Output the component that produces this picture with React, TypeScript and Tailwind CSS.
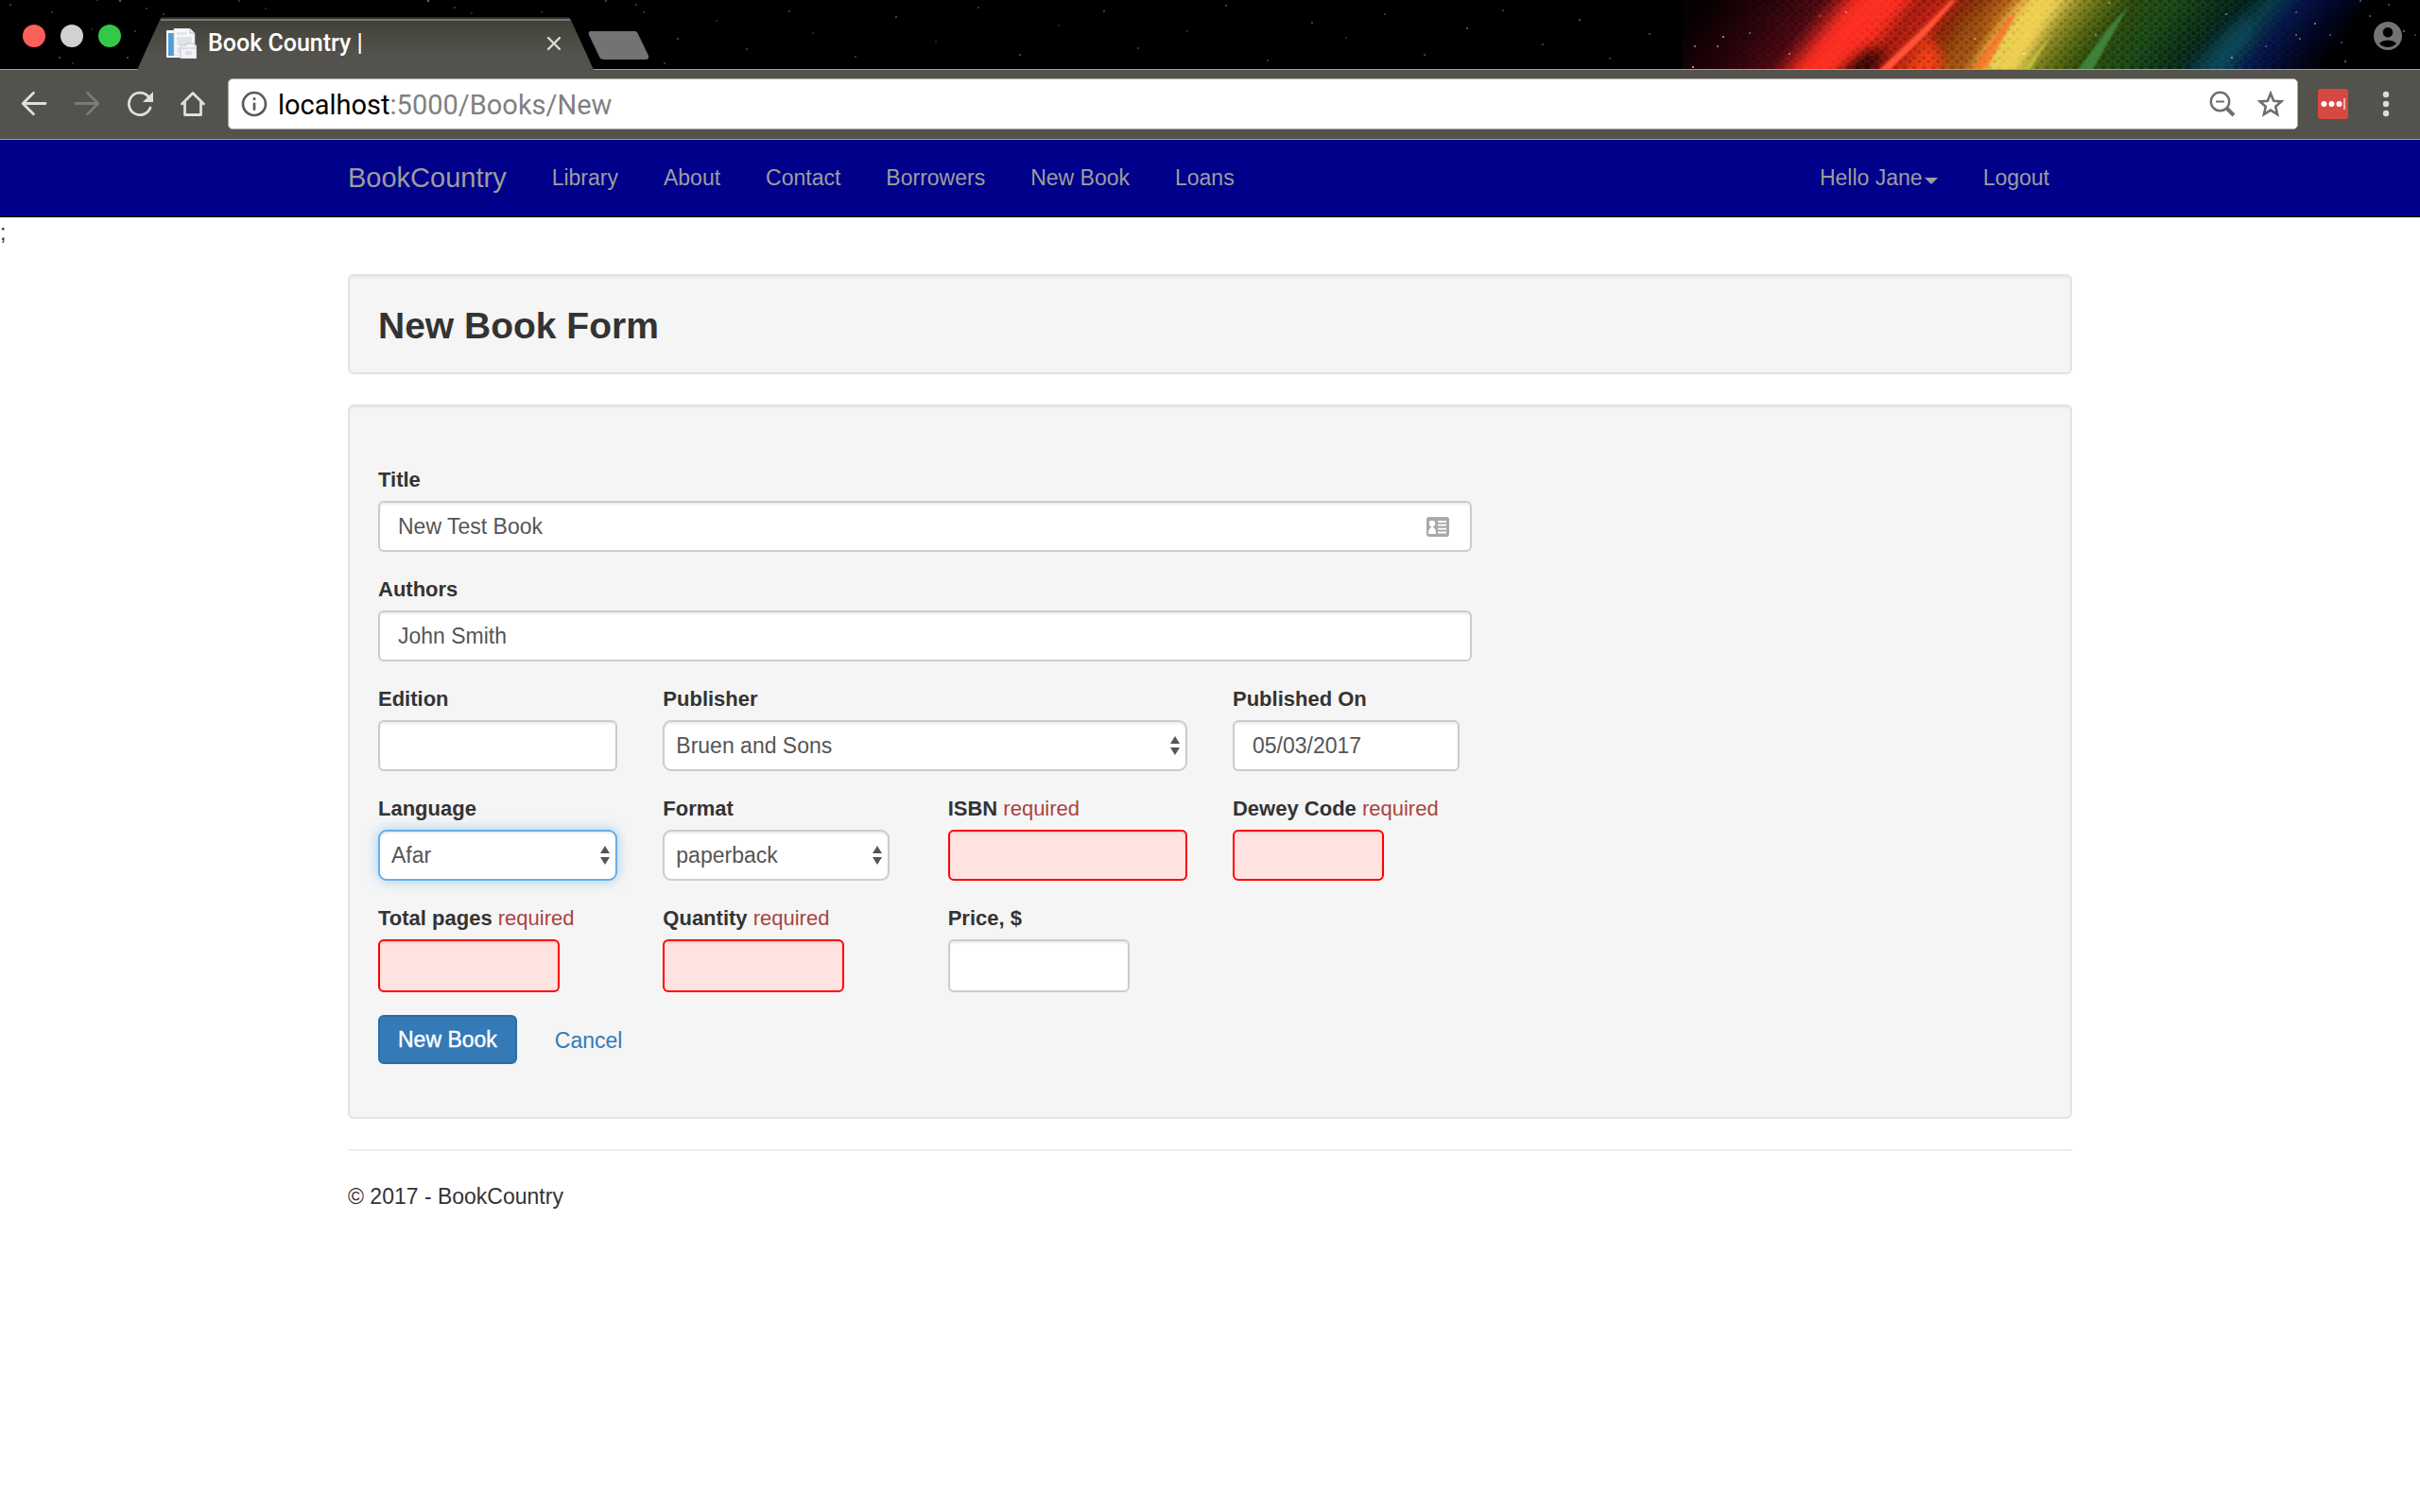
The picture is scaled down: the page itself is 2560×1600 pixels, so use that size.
import type { ReactNode } from "react";
import { MdAccountCircle, MdInfoOutline } from "react-icons/md";

const STARS: [number, number, number][] = [
  [11, 5, 0.4], [55, 13, 0.4], [127, 1, 0.7], [103, 0, 0.4], [155, 9, 0.4], [97, 31, 0.3], [143, 33, 0.4],
  [63, 61, 0.5], [135, 61, 0.5], [77, 67, 0.3], [173, 15, 0.4], [253, 1, 0.4], [281, 9, 0.3], [453, 1, 0.8],
  [481, 8, 0.4], [499, 14, 0.3], [573, 13, 0.3], [641, 1, 0.5], [673, 5, 0.4], [681, 13, 0.4], [717, 41, 0.5],
  [703, 67, 0.4], [758, 22, 0.3], [790, 52, 0.4], [835, 12, 0.4], [860, 35, 0.3], [905, 60, 0.4], [948, 18, 0.5],
  [990, 44, 0.3], [1035, 8, 0.4], [1079, 58, 0.5], [1120, 27, 0.3], [1168, 12, 0.5], [1204, 51, 0.4],
  [1256, 33, 0.3], [1297, 6, 0.5], [1341, 64, 0.4], [1388, 24, 0.5], [1424, 40, 0.3], [1465, 15, 0.4],
  [1507, 58, 0.5], [1552, 30, 0.6], [1590, 11, 0.4], [1632, 47, 0.5], [1671, 21, 0.6], [1703, 62, 0.4],
  [1745, 36, 0.5], [1791, 71, 0.8], [1793, 49, 0.6], [1817, 49, 0.6], [1823, 39, 0.7], [1851, 35, 0.5],
  [1893, 57, 0.6], [1925, 17, 0.4], [1953, 13, 0.5], [2089, 41, 0.5], [2141, 57, 0.9], [2217, 37, 0.5],
  [2231, 3, 0.5], [2355, 15, 0.5], [2361, 61, 0.6], [2397, 49, 0.4], [2429, 37, 0.5], [2433, 41, 0.5],
  [2449, 25, 0.6], [2429, 13, 0.4], [2477, 45, 0.4], [2481, 65, 0.5], [2497, 1, 0.4], [2507, 17, 0.4],
  [2527, 5, 0.4], [2543, 33, 0.5], [2555, 37, 0.3], [2465, 37, 0.4],
];

function ThemeArt() {
  return (
    <>
      <svg className="absolute left-0 top-0" width="2560" height="73" aria-hidden="true">
        {STARS.filter((s) => s[0] < 1780).map(([x, y, o], i) => (
          <rect key={i} x={x - 1} y={y - 1} width="2" height="2" fill="#fff" opacity={o * 0.5} />
        ))}
      </svg>
      <svg className="absolute right-0 top-0" width="780" height="73" viewBox="0 0 780 73" aria-hidden="true">
        <defs>
          <linearGradient id="spectrum" gradientUnits="userSpaceOnUse" x1="0" y1="0" x2="780" y2="0" gradientTransform="skewX(-38)">
            <stop offset="0.03" stopColor="#050001" />
            <stop offset="0.13" stopColor="#2a030b" />
            <stop offset="0.19" stopColor="#48070f" />
            <stop offset="0.235" stopColor="#d9241f" />
            <stop offset="0.26" stopColor="#ff3029" />
            <stop offset="0.295" stopColor="#f52b1c" />
            <stop offset="0.325" stopColor="#a8190f" />
            <stop offset="0.36" stopColor="#bf200f" />
            <stop offset="0.385" stopColor="#8a2408" />
            <stop offset="0.41" stopColor="#8a3c0a" />
            <stop offset="0.445" stopColor="#b86415" />
            <stop offset="0.462" stopColor="#e2a63a" />
            <stop offset="0.48" stopColor="#ecd050" />
            <stop offset="0.51" stopColor="#e2c94c" />
            <stop offset="0.54" stopColor="#8f8c26" />
            <stop offset="0.575" stopColor="#536610" />
            <stop offset="0.61" stopColor="#29480a" />
            <stop offset="0.67" stopColor="#154716" />
            <stop offset="0.72" stopColor="#083016" />
            <stop offset="0.765" stopColor="#03201d" />
            <stop offset="0.8" stopColor="#063c4a" />
            <stop offset="0.84" stopColor="#041448" />
            <stop offset="0.89" stopColor="#010726" />
            <stop offset="0.94" stopColor="#000000" />
          </linearGradient>
          <pattern id="mesh" width="10" height="10" patternUnits="userSpaceOnUse">
            <path d="M0 2 L2 2 L4 5 L7 5 L9 2 L10 2 M2 2 L0 -1 M9 2 L11 -1 M4 5 L2 8 L0 8 M7 5 L9 8 L10 8 M2 8 L4 11 M9 8 L7 11" fill="none" stroke="#ffb080" strokeWidth="1" opacity="0.1" />
            <circle cx="5" cy="1" r="2" fill="#000" opacity="0.14" />
            <circle cx="0" cy="5" r="2" fill="#000" opacity="0.14" />
            <circle cx="10" cy="5" r="2" fill="#000" opacity="0.14" />
          </pattern>
          <linearGradient id="meshFade" x1="0" x2="1" y1="0" y2="0">
            <stop offset="0.03" stopColor="#000" />
            <stop offset="0.25" stopColor="#fff" />
            <stop offset="0.7" stopColor="#fff" />
            <stop offset="0.88" stopColor="#000" />
          </linearGradient>
          <mask id="meshMask">
            <rect width="780" height="73" fill="url(#meshFade)" />
          </mask>
          <filter id="soft" x="-30%" y="-30%" width="160%" height="160%">
            <feGaussianBlur stdDeviation="7" />
          </filter>
          <filter id="slight" x="-30%" y="-30%" width="160%" height="160%">
            <feGaussianBlur stdDeviation="1" />
          </filter>
        </defs>
        <rect width="780" height="73" fill="url(#spectrum)" />
        <path d="M150 90 L195 52 L215 54 L195 90 Z" fill="#240200" filter="url(#soft)" opacity="0.9" />
        <path d="M225 90 L258 35 L276 60 L268 90 Z" fill="#ff3d12" filter="url(#soft)" opacity="0.9" />
        <path d="M275 90 L300 20 L325 25 L300 90 Z" fill="#94480e" filter="url(#soft)" opacity="0.7" />
        <rect width="780" height="73" fill="url(#mesh)" mask="url(#meshMask)" />
        <path d="M112 85 L190 -10 L242 -10 L142 85 Z" fill="#ff2e22" filter="url(#soft)" opacity="0.8" />
        <path d="M306 73 L345 18 L352 16 L322 73 Z" fill="#ff5a24" filter="url(#slight)" opacity="0.6" />
        <path d="M326 85 L376 -10 L398 -10 L352 85 Z" fill="#f2d254" filter="url(#soft)" opacity="0.9" />
        <path d="M360 74 L392 34 L367 74 Z" fill="#c8d04a" filter="url(#slight)" opacity="0.8" />
        <path d="M208 74 L250 34 L284 0 L289 0 L258 36 L219 74 Z" fill="#ff5338" filter="url(#slight)" />
        <path d="M418 74 L450 30 L472 6 L455 36 L434 74 Z" fill="#459045" filter="url(#slight)" opacity="0.8" />
        <path d="M530 80 L565 40 L600 10 L600 40 L570 80 Z" fill="#085063" filter="url(#soft)" opacity="0.6" />
        {STARS.filter((s) => s[0] >= 1780).map(([x, y, o], i) => (
          <rect key={i} x={x - 1781} y={y - 1} width="2" height="2" fill="#fff" opacity={o * 0.7} />
        ))}
      </svg>
    </>
  );
}

function Favicon() {
  return (
    <svg width="32" height="32" viewBox="0 0 32 32" aria-hidden="true" className="shrink-0">
      <rect x="0" y="2" width="20" height="29" fill="#f4f7fa" />
      <rect x="2" y="5" width="6" height="24" fill="#4f9fd6" />
      <path d="M8 0 H25 L30 5 V28 H8 Z" fill="#f6f7f9" stroke="#c9ced6" strokeWidth="0.6" />
      <rect x="11" y="4" width="11" height="3" fill="#e3e6eb" />
      <rect x="11" y="9" width="16" height="9" fill="#dfe3e8" />
      <rect x="11" y="20" width="5" height="6" fill="#e3e6eb" />
      <path d="M25 0 L30 5 H25 Z" fill="#fff" stroke="#9aa0a8" strokeWidth="0.8" />
      <path d="M15 18 H21 V16 H30 V18 H32 V32 H15 Z" fill="#f3f3f7" stroke="#b9bdc8" strokeWidth="0.8" />
      <path d="M16 21 H31" stroke="#c6cad6" />
      <rect x="20" y="24" width="7" height="4" fill="#dcdee8" />
    </svg>
  );
}

function TabStrip() {
  return (
    <header className="relative flex h-[73px] items-center overflow-x-clip bg-black">
      <ThemeArt />
      <div className="relative flex gap-4 pb-px pl-6 pt-1">
        <button aria-label="Close window" className="size-6 rounded-full bg-[#fc605b]" />
        <button aria-label="Minimize window" className="size-6 rounded-full bg-[#d1d1d1]" />
        <button aria-label="Zoom window" className="size-6 rounded-full bg-[#34c84a]" />
      </div>
      <div className="relative ml-[17px] h-[74px] w-[483px] self-start">
        <svg className="absolute left-0 top-0" width="483" height="74" viewBox="0 0 483 74" aria-hidden="true">
          <defs>
            <linearGradient id="tab" x1="0" x2="0" y1="0" y2="1">
              <stop offset="0" stopColor="#403f37" />
              <stop offset="0.7" stopColor="#53524c" />
            </linearGradient>
          </defs>
          <path d="M0 74 L25 19 H458 L483 74 Z" fill="url(#tab)" />
          <path d="M26 19 H457" stroke="#2b2b28" strokeWidth="2" />
          <path d="M25 21 H458" stroke="#77766f" strokeWidth="2" />
        </svg>
        <div className="relative flex h-full items-center pl-[31px] pr-[35px] pt-[18px]">
          <Favicon />
          <span className="ml-3 flex-1 font-[Roboto,sans-serif] text-[25px] font-medium leading-8 text-white">Book Country |</span>
          <button aria-label="Close tab">
            <svg width="14" height="14" viewBox="0 0 14 14">
              <path d="M1 1 L13 13 M13 1 L1 13" stroke="#dcdcda" strokeWidth="2.4" strokeLinecap="round" />
            </svg>
          </button>
        </div>
      </div>
      <button aria-label="New tab" className="relative -ml-[6px] mt-[23px] self-start pt-[10px]">
        <svg width="66" height="30" viewBox="0 0 66 30">
          <path d="M3 0 H49 Q52 0 53 3 L64 26 Q65 30 61 30 H17 Q13 30 12 27 L1 4 Q0 0 3 0 Z" fill="#737373" />
        </svg>
      </button>
      <button aria-label="Profile" className="relative ml-auto mr-4 pt-[3px] text-[#747474]">
        <MdAccountCircle size={36} />
      </button>
    </header>
  );
}

function ToolIcon({ label, color, children }: { label: string; color: string; children: ReactNode }) {
  return (
    <button aria-label={label} className="shrink-0">
      <svg width="28" height="28" viewBox="0 0 28 28" fill="none" stroke={color} strokeWidth="2.8" strokeLinecap="round" strokeLinejoin="round">
        {children}
      </svg>
    </button>
  );
}

function Toolbar() {
  return (
    <div className="flex h-[75px] items-center border-y border-[#a3a29c] bg-[#53524c] pb-px pl-[22px] pr-[30px]">
      <div className="flex gap-7">
        <ToolIcon label="Back" color="#dfdfdc">
          <path d="M26 13.500 H2.500 M13.500 2.200 L2.200 13.500 L13.500 24.800" />
        </ToolIcon>
        <ToolIcon label="Forward" color="#7b7a74">
          <path d="M2 13.500 H25.500 M14.500 2.200 L25.800 13.500 L14.500 24.800" />
        </ToolIcon>
        <ToolIcon label="Reload" color="#dfdfdc">
          <path d="M25 18 A11.700 11.700 0 1 1 22.500 5.800" />
          <path d="M28 1 V12 H17 Z" fill="#dfdfdc" stroke="none" />
        </ToolIcon>
        <ToolIcon label="Home" color="#dfdfdc">
          <path d="M2.500 14 L14 2.500 L25.500 14 M5.500 12.500 V25.500 H22.500 V12.500" />
        </ToolIcon>
      </div>
      <div className="ml-[23px] flex h-[54px] flex-1 items-center rounded-[5px] border border-[#a9a8a3] bg-white pl-[11px] pr-[13px]">
        <MdInfoOutline size={32} color="#5a5a5a" className="shrink-0" />
        <div className="ml-[9px] flex-1 pt-[2px] font-[Roboto,sans-serif] text-[29px] leading-9 text-[#808080]">
          <span className="text-black">localhost</span>:5000/Books/New
        </div>
        <button aria-label="Zoom out" className="mr-[22px]">
          <svg width="28" height="28" viewBox="0 0 28 28" fill="none" stroke="#6e6e6e">
            <circle cx="11.500" cy="11.500" r="9.700" strokeWidth="2.400" />
            <path d="M7 11.500 H16" strokeWidth="2" />
            <path d="M18.500 18.500 L26 26" strokeWidth="4" />
          </svg>
        </button>
        <button aria-label="Bookmark">
          <svg width="30" height="30" viewBox="0 0 30 30" fill="none" stroke="#6e6e6e" strokeWidth="2.600">
            <path d="M15 4 L18.200 11.700 L26.400 12.400 L20.200 17.800 L22.100 26 L15 21.600 L7.900 26 L9.800 17.800 L3.600 12.400 L11.800 11.700 Z" />
          </svg>
        </button>
      </div>
      <button aria-label="Password manager" className="ml-[21px]">
        <svg width="32" height="32" viewBox="0 0 32 32">
          <rect width="32" height="32" rx="3" fill="#d84842" />
          <circle cx="6.500" cy="16" r="3" fill="#fff" />
          <circle cx="14.500" cy="16" r="3" fill="#fff" />
          <circle cx="22.500" cy="16" r="3" fill="#fff" />
          <rect x="27" y="10" width="2" height="12" fill="#f0b4b1" />
        </svg>
      </button>
      <button aria-label="Menu" className="ml-[34px]">
        <svg width="12" height="28" viewBox="0 0 12 28" fill="#dcdcd9">
          <circle cx="6" cy="4" r="3.200" />
          <circle cx="6" cy="14" r="3.200" />
          <circle cx="6" cy="24" r="3.200" />
        </svg>
      </button>
    </div>
  );
}

function NavBar() {
  return (
    <nav className="border-b-2 border-[#080808] bg-[#00008b] text-[#9d9d9d]">
      <div className="mx-auto flex h-20 max-w-[1824px] items-center gap-12 pr-6">
        <a href="#" className="text-[29px]">BookCountry</a>
        {["Library", "About", "Contact", "Borrowers", "New Book", "Loans"].map((item) => (
          <a key={item} href="#">{item}</a>
        ))}
        <a href="#" className="ml-auto flex items-center gap-[2px]">
          Hello Jane
          <svg width="14" height="7" viewBox="0 0 14 7" className="mt-[6px]" aria-hidden="true">
            <path d="M0 0 H14 L7 7 Z" fill="#9d9d9d" />
          </svg>
        </a>
        <a href="#">Logout</a>
      </div>
    </nav>
  );
}

function Field({ id, label, required, className, children }: { id: string; label: string; required?: boolean; className?: string; children: ReactNode }) {
  return (
    <div className={className}>
      <label htmlFor={id} className="mb-[6px] block whitespace-nowrap text-[22px] font-bold leading-8">
        {label}
        {required && <span className="font-normal text-[#a94442]"> required</span>}
      </label>
      {children}
    </div>
  );
}

function TextField({ id, value = "", invalid, tall }: { id: string; value?: string; invalid?: boolean; tall?: boolean }) {
  return (
    <input
      id={id}
      type="text"
      defaultValue={value}
      className={`block w-full rounded-[6px] border-2 px-[19px] text-[#555] shadow-[inset_0_2px_2px_rgba(0,0,0,0.075)] outline-none ${
        invalid ? "border-[#ff0000] bg-[#ffe3e0]" : "border-[#ccc] bg-white"
      } ${tall ? "h-14" : "h-[54px]"}`}
    />
  );
}

function SelectField({ id, value, active }: { id: string; value: string; active?: boolean }) {
  return (
    <div className="relative">
      <select
        id={id}
        className={`block h-[54px] w-full appearance-none rounded-[9px] border-2 bg-white pl-3 pr-8 text-[#555] outline-none ${
          active
            ? "border-[#66afe9] shadow-[inset_0_2px_2px_rgba(0,0,0,0.075),0_0_13px_rgba(102,175,233,0.6)]"
            : "border-[#ccc] shadow-[inset_0_2px_2px_rgba(0,0,0,0.075)]"
        }`}
      >
        <option>{value}</option>
      </select>
      <svg className="pointer-events-none absolute right-2 top-[17px]" width="10" height="20" viewBox="0 0 10 20" aria-hidden="true">
        <path d="M5 0 L10 8 H0 Z M0 12 H10 L5 20 Z" fill="#555" />
      </svg>
    </div>
  );
}

function BookForm() {
  return (
    <form>
      <div className="grid grid-cols-6 gap-x-12 gap-y-6">
        <Field id="title" label="Title" className="col-span-4">
          <div className="relative">
            <TextField id="title" value="New Test Book" />
            <svg className="absolute right-6 top-[17px]" width="24" height="21" viewBox="0 0 24 21" aria-hidden="true">
              <rect width="24" height="21" rx="3" fill="#a9a9a9" />
              <circle cx="6" cy="7" r="3.200" fill="#fff" />
              <path d="M5 8 H7 V11 Q10 12 10 18 H2 Q2 12 5 11 Z" fill="#fff" />
              <path d="M12 5 H21 M12 8.600 H21 M12 12.600 H21 M12 16.500 H21" stroke="#fff" strokeWidth="1.800" />
            </svg>
          </div>
        </Field>
        <Field id="authors" label="Authors" className="col-span-4 col-start-1">
          <TextField id="authors" value="John Smith" />
        </Field>
        <Field id="edition" label="Edition" className="col-start-1">
          <TextField id="edition" />
        </Field>
        <Field id="publisher" label="Publisher" className="col-span-2">
          <SelectField id="publisher" value="Bruen and Sons" />
        </Field>
        <Field id="published" label="Published On">
          <div className="max-w-60">
            <TextField id="published" value="05/03/2017" />
          </div>
        </Field>
        <Field id="language" label="Language" className="col-start-1">
          <SelectField id="language" value="Afar" active />
        </Field>
        <Field id="format" label="Format">
          <div className="max-w-60">
            <SelectField id="format" value="paperback" />
          </div>
        </Field>
        <Field id="isbn" label="ISBN" required>
          <TextField id="isbn" invalid />
        </Field>
        <Field id="dewey" label="Dewey Code" required>
          <div className="max-w-40">
            <TextField id="dewey" invalid />
          </div>
        </Field>
        <Field id="pages" label="Total pages" required className="col-start-1">
          <div className="max-w-48">
            <TextField id="pages" invalid tall />
          </div>
        </Field>
        <Field id="quantity" label="Quantity" required>
          <div className="max-w-48">
            <TextField id="quantity" invalid tall />
          </div>
        </Field>
        <Field id="price" label="Price, $">
          <div className="max-w-48">
            <TextField id="price" tall />
          </div>
        </Field>
      </div>
      <div className="mt-6 flex items-center gap-10">
        <button type="button" className="h-[52px] rounded-[6px] border-2 border-[#2e6da4] bg-[#337ab7] px-[19px] text-white [-webkit-text-stroke:0.4px_white]">
          New Book
        </button>
        <a href="#" className="pt-[2px] text-[#337ab7]">Cancel</a>
      </div>
    </form>
  );
}

export default function App() {
  return (
    <div className="min-h-screen bg-white font-['Liberation_Sans',Arial,sans-serif] text-[23px] leading-8 text-[#333]">
      <TabStrip />
      <Toolbar />
      <NavBar />
      <p>;</p>
      <main className="mx-auto mt-7 max-w-[1824px]">
        <section className="rounded-[6px] border-2 border-[#e3e3e3] bg-[#f5f5f5] px-[30px] pb-7 pt-8 shadow-[inset_0_2px_2px_rgba(0,0,0,0.05)]">
          <h2 className="text-[39px] font-bold leading-[42px]">New Book Form</h2>
        </section>
        <section className="mt-8 rounded-[6px] border-2 border-[#e3e3e3] bg-[#f5f5f5] px-[30px] pb-14 pt-[62px] shadow-[inset_0_2px_2px_rgba(0,0,0,0.05)]">
          <BookForm />
        </section>
        <hr className="my-8 border-t-2 border-[#eee]" />
        <footer>
          <p>© 2017 - BookCountry</p>
        </footer>
      </main>
    </div>
  );
}
